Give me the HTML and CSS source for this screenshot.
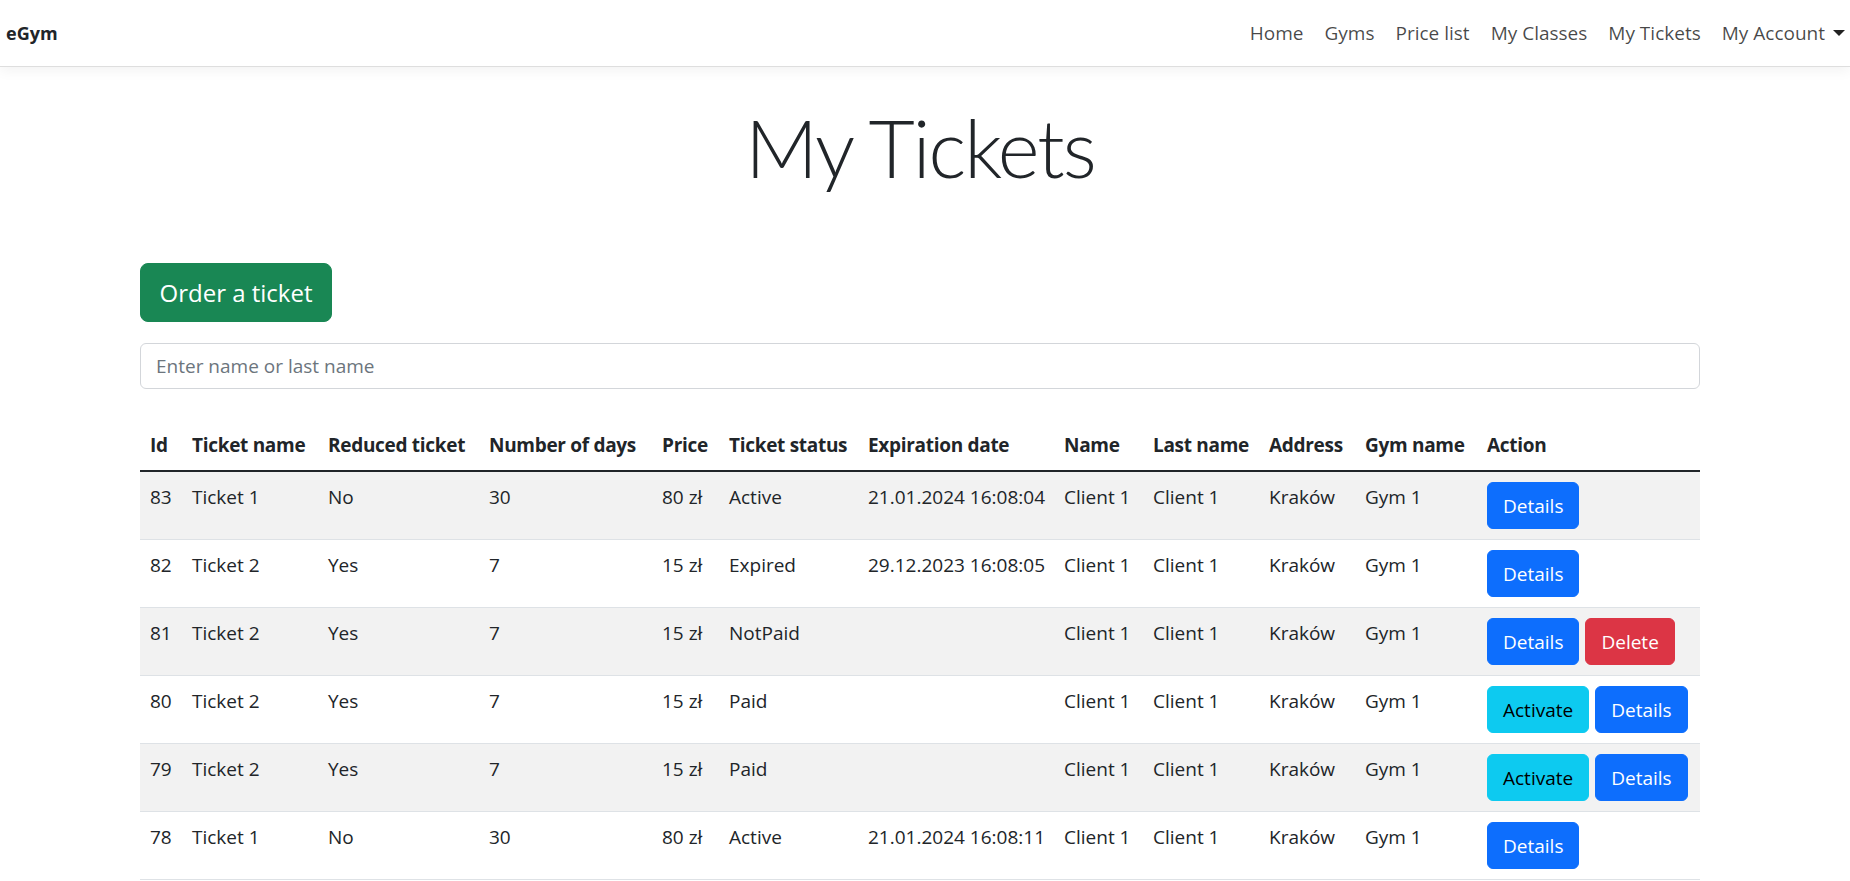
FILE: index.html
```html
<!DOCTYPE html>
<html lang="en">
<head>
<meta charset="utf-8">
<title>My Tickets - eGym</title>
<link rel="stylesheet" href="styles.css">
</head>
<body>
<header class="navbar">
  <a class="brand" href="#">eGym</a>
  <ul class="nav">
    <li><a class="nav-link" href="#">Home</a></li>
    <li><a class="nav-link" href="#">Gyms</a></li>
    <li><a class="nav-link" href="#">Price list</a></li>
    <li><a class="nav-link" href="#">My Classes</a></li>
    <li><a class="nav-link" href="#">My Tickets</a></li>
    <li><a class="nav-link dropdown-toggle" href="#">My Account</a></li>
  </ul>
</header>
<main class="page">
  <h1 class="title">My Tickets</h1>
  <div class="toolbar">
    <a class="btn btn-lg btn-success" href="#">Order a ticket</a>
  </div>
  <input class="search" type="text" placeholder="Enter name or last name">
  <table class="table">
    <colgroup>
      <col class="c-id"><col class="c-tname"><col class="c-red"><col class="c-days"><col class="c-price"><col class="c-status"><col class="c-exp"><col class="c-name"><col class="c-last"><col class="c-addr"><col class="c-gym"><col class="c-action">
    </colgroup>
    <thead>
      <tr>
        <th>Id</th><th>Ticket name</th><th>Reduced ticket</th><th>Number of days</th><th>Price</th><th>Ticket status</th><th>Expiration date</th><th>Name</th><th>Last name</th><th>Address</th><th>Gym name</th><th>Action</th>
      </tr>
    </thead>
    <tbody>
      <tr>
        <td>83</td><td>Ticket 1</td><td>No</td><td>30</td><td>80 zł</td><td>Active</td><td>21.01.2024 16:08:04</td><td>Client 1</td><td>Client 1</td><td>Kraków</td><td>Gym 1</td>
        <td><div class="actions"><a class="btn btn-primary" href="#">Details</a></div></td>
      </tr>
      <tr>
        <td>82</td><td>Ticket 2</td><td>Yes</td><td>7</td><td>15 zł</td><td>Expired</td><td>29.12.2023 16:08:05</td><td>Client 1</td><td>Client 1</td><td>Kraków</td><td>Gym 1</td>
        <td><div class="actions"><a class="btn btn-primary" href="#">Details</a></div></td>
      </tr>
      <tr>
        <td>81</td><td>Ticket 2</td><td>Yes</td><td>7</td><td>15 zł</td><td>NotPaid</td><td></td><td>Client 1</td><td>Client 1</td><td>Kraków</td><td>Gym 1</td>
        <td><div class="actions"><a class="btn btn-primary" href="#">Details</a><a class="btn btn-danger" href="#">Delete</a></div></td>
      </tr>
      <tr>
        <td>80</td><td>Ticket 2</td><td>Yes</td><td>7</td><td>15 zł</td><td>Paid</td><td></td><td>Client 1</td><td>Client 1</td><td>Kraków</td><td>Gym 1</td>
        <td><div class="actions"><a class="btn btn-info" href="#">Activate</a><a class="btn btn-primary" href="#">Details</a></div></td>
      </tr>
      <tr>
        <td>79</td><td>Ticket 2</td><td>Yes</td><td>7</td><td>15 zł</td><td>Paid</td><td></td><td>Client 1</td><td>Client 1</td><td>Kraków</td><td>Gym 1</td>
        <td><div class="actions"><a class="btn btn-info" href="#">Activate</a><a class="btn btn-primary" href="#">Details</a></div></td>
      </tr>
      <tr>
        <td>78</td><td>Ticket 1</td><td>No</td><td>30</td><td>80 zł</td><td>Active</td><td>21.01.2024 16:08:11</td><td>Client 1</td><td>Client 1</td><td>Kraków</td><td>Gym 1</td>
        <td><div class="actions"><a class="btn btn-primary" href="#">Details</a></div></td>
      </tr>
    </tbody>
  </table>
</main>
</body>
</html>
```
FILE: styles.css
```css
* { box-sizing: border-box; }

html, body {
  margin: 0;
  padding: 0;
  background: #fff;
}

body {
  font-family: "Open Sans", "Noto Sans", sans-serif;
  font-size: 19px;
  line-height: 30px;
  color: #212529;
}

a { text-decoration: none; }

/* Navbar */
.navbar {
  display: flex;
  align-items: center;
  justify-content: space-between;
  height: 67px;
  padding: 0 5px 0 6px;
  background: #fff;
  border-bottom: 1px solid #dedede;
  box-shadow: 0 4px 12px rgba(0, 0, 0, 0.05);
}

.brand {
  font-size: 18px;
  font-weight: 700;
  color: #212529;
}

.nav {
  display: flex;
  align-items: center;
  gap: 21px;
  margin: 0;
  padding: 0;
  list-style: none;
}

.nav-link {
  color: rgba(0, 0, 0, 0.72);
  font-size: 19px;
}

.dropdown-toggle::after {
  content: "";
  display: inline-block;
  margin-left: 8px;
  vertical-align: 4px;
  border-top: 6px solid #222;
  border-left: 6px solid transparent;
  border-right: 6px solid transparent;
}

/* Page */
.page {
  padding: 0 150px 0 140px;
}

.title {
  margin: 32px 0 68px;
  font-family: "Lato", "Open Sans", sans-serif;
  font-weight: 300;
  font-size: 80px;
  line-height: 96px;
  letter-spacing: -2px;
  text-align: center;
  color: #212529;
}

.toolbar {
  display: flex;
  margin-bottom: 21px;
}

.btn {
  display: inline-flex;
  align-items: center;
  justify-content: center;
  height: 47px;
  padding: 0 15px;
  border: 1px solid transparent;
  border-radius: 6px;
  font-size: 19px;
  line-height: 30px;
  color: #fff;
  white-space: nowrap;
}

.btn-lg {
  height: 59px;
  width: 192px;
  padding: 0 20px;
  font-size: 24px;
  border-radius: 8px;
}

.btn-success { background: #198754; border-color: #198754; }
.btn-primary { background: #0d6efd; border-color: #0d6efd; }
.btn-danger  { background: #dc3545; border-color: #dc3545; }
.btn-info    { background: #0dcaf0; border-color: #0dcaf0; color: #000; }

.search {
  display: block;
  width: 100%;
  height: 46px;
  margin: 0 0 31px;
  padding: 0 15px;
  border: 1px solid #d3d6da;
  border-radius: 6px;
  font-family: inherit;
  font-size: 19px;
  color: #212529;
  background: #fff;
}

.search::placeholder { color: #6c757d; }

/* Table */
.table {
  width: 1560px;
  table-layout: fixed;
  border-collapse: collapse;
}

.c-id { width: 42px; }
.c-tname { width: 136px; }
.c-red { width: 161px; }
.c-days { width: 173px; }
.c-price { width: 67px; }
.c-status { width: 139px; }
.c-exp { width: 196px; }
.c-name { width: 89px; }
.c-last { width: 116px; }
.c-addr { width: 96px; }
.c-gym { width: 122px; }
.c-action { width: 223px; }

.table th,
.table td {
  padding: 10px;
  text-align: left;
  vertical-align: top;
  white-space: nowrap;
}

.table th {
  font-weight: 700;
  letter-spacing: -0.3px;
  border-bottom: 2px solid #212529;
}

.table td {
  border-bottom: 1px solid #dee2e6;
}

.table tbody tr:nth-child(odd) td {
  background: #f2f2f2;
}

.actions {
  display: flex;
  gap: 6px;
}
```
